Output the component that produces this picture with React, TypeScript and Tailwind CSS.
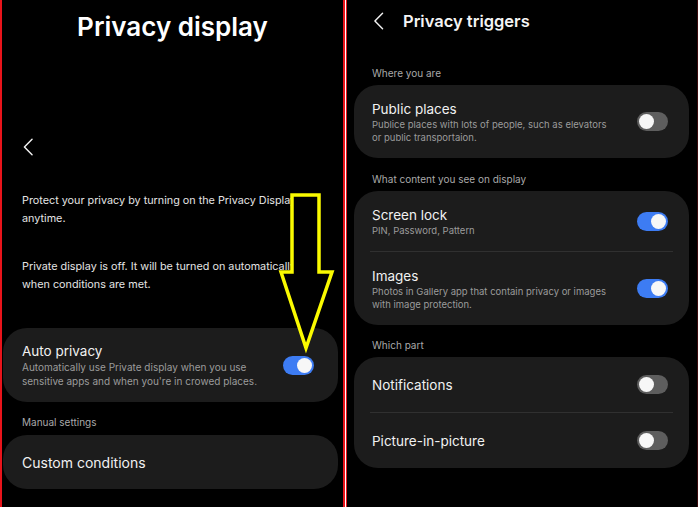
import React from 'react';

const font = { fontFamily: 'Inter, "Noto Sans", sans-serif' };

const Chevron = ({ className }: { className?: string }) => (
  <svg viewBox="0 0 12 20" className={className} fill="none">
    <path d="M10.5 1.5 2 10l8.5 8.5" stroke="#f2f2f2" strokeWidth="1.6" strokeLinecap="round" strokeLinejoin="round" />
  </svg>
);

const Toggle = ({ on }: { on: boolean }) => (
  <div
    className={
      on
        ? 'flex h-[19px] w-[31px] shrink-0 items-center justify-end rounded-full bg-[#3d7cf3] px-[2px]'
        : 'flex h-[19px] w-[31px] shrink-0 items-center justify-start rounded-full bg-[#5e5e5e] px-[2px]'
    }
  >
    <div className="h-[15px] w-[15px] rounded-full bg-[#f7f7f7]" />
  </div>
);

const SectionLabel = ({ children, className }: { children: React.ReactNode; className?: string }) => (
  <div className={`text-[10px] leading-[14px] text-[#a9a9a9] ${className ?? ''}`}>{children}</div>
);

interface RowProps {
  title: string;
  sub?: string[];
  on: boolean;
  className?: string;
}

const Row = ({ title, sub, on, className }: RowProps) => (
  <div className={`flex items-center justify-between pl-[18px] pr-[21px] ${className ?? ''}`}>
    <div className="flex flex-col">
      <div className="text-[13.5px] leading-[18px] text-[#f1f1f1]">{title}</div>
      {sub?.map((s) => (
        <div key={s} className="whitespace-nowrap text-[9.5px] leading-[13px] text-[#9b9b9b]">
          {s}
        </div>
      ))}
    </div>
    <Toggle on={on} />
  </div>
);

const Divider = () => <div className="mx-[16px] h-px bg-[#303030]" />;

const LeftPanel = () => (
  <div className="relative flex h-full w-[345px] shrink-0 flex-col border-l-2 border-r-2 border-[#e8141b] bg-black">
    <h1 className="mt-[11px] text-center text-[26px] font-semibold leading-[32px] text-white">Privacy display</h1>
    <Chevron className="ml-[20px] mt-[95px] h-[18px] w-[12px]" />
    <div className="ml-[20px] mt-[36px] whitespace-nowrap text-[10.8px] leading-[18px] text-[#e4e4e4]">
      Protect your privacy by turning on the Privacy Display
      <br />
      anytime.
    </div>
    <div className="ml-[20px] mt-[30px] whitespace-nowrap text-[10.8px] leading-[18px] text-[#e4e4e4]">
      Private display is off. It will be turned on automatically
      <br />
      when conditions are met.
    </div>
    <div className="ml-px mr-[5px] mt-[34px] flex h-[74px] items-center justify-between rounded-[24px] bg-[#1c1c1c] pl-[19px] pr-[24px]">
      <div className="flex flex-col">
        <div className="text-[13.5px] leading-[18px] text-[#f1f1f1]">Auto privacy</div>
        <div className="text-[10px] leading-[14px] text-[#9b9b9b]">Automatically use Private display when you use</div>
        <div className="text-[10px] leading-[14px] text-[#9b9b9b]">sensitive apps and when you&apos;re in crowed places.</div>
      </div>
      <Toggle on />
    </div>
    <SectionLabel className="ml-[20px] mt-[13px]">Manual settings</SectionLabel>
    <div className="ml-px mr-[5px] mt-[6px] flex h-[54px] items-center rounded-[24px] bg-[#1c1c1c] pl-[19px]">
      <span className="text-[14px] text-[#f1f1f1]">Custom conditions</span>
    </div>

    {/* yellow annotation arrow */}
    <svg className="absolute left-0 top-0" width="343" height="507" viewBox="-2 0 343 507">
      <path
        d="M288 195H315V272H328L302 348L277 272H288Z"
        fill="#000"
        stroke="#fafa00"
        strokeWidth="3.5"
        strokeLinejoin="miter"
      />
    </svg>
  </div>
);

const RightPanel = () => (
  <div className="flex h-full flex-1 flex-col border-l border-r border-l-[#e8141b] border-r-[#3a0a0c] bg-black">
    <div className="mt-[9px] flex h-[24px] items-center">
      <Chevron className="ml-[26px] h-[18px] w-[11px]" />
      <span className="ml-[19px] text-[16.5px] font-semibold text-[#f4f4f4]">Privacy triggers</span>
    </div>
    <SectionLabel className="ml-[25px] mt-[33px]">Where you are</SectionLabel>
    <div className="ml-[7px] mr-[8px] mt-[5px] flex flex-col rounded-[24px] bg-[#1c1c1c]">
      <Row
        title="Public places"
        sub={['Publice places with lots of people, such as elevators', 'or public transportaion.']}
        on={false}
        className="h-[73px]"
      />
    </div>
    <SectionLabel className="ml-[25px] mt-[14px]">What content you see on display</SectionLabel>
    <div className="ml-[7px] mr-[8px] mt-[5px] flex flex-col rounded-[24px] bg-[#1c1c1c]">
      <Row title="Screen lock" sub={['PIN, Password, Pattern']} on className="h-[60px] pt-px" />
      <Divider />
      <Row
        title="Images"
        sub={['Photos in Gallery app that contain privacy or images', 'with image protection.']}
        on
        className="h-[73px]"
      />
    </div>
    <SectionLabel className="ml-[25px] mt-[13px]">Which part</SectionLabel>
    <div className="ml-[7px] mr-[8px] mt-[5px] flex flex-col rounded-[24px] bg-[#1c1c1c]">
      <Row title="Notifications" on={false} className="h-[55px]" />
      <Divider />
      <Row title="Picture-in-picture" on={false} className="h-[55px]" />
    </div>
  </div>
);

export default function App() {
  return (
    <div className="flex h-[507px] w-[698px] overflow-hidden bg-black" style={font}>
      <LeftPanel />
      <div className="h-full w-px shrink-0 bg-white" />
      <RightPanel />
    </div>
  );
}
